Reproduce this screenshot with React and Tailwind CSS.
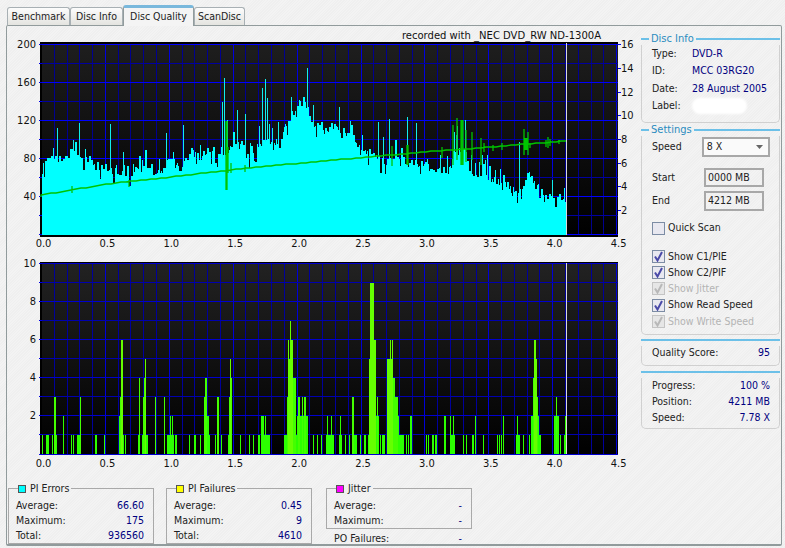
import React from "react";

const FONT = "font-['DejaVu_Sans_Condensed','DejaVu_Sans',sans-serif] text-[10.5px]";

// top chart: outline of the PI error bars as [x, y] in page pixels
const errorOutline = [
  [41, 166], [53, 155], [63, 162], [70, 153], [87, 155], [93, 165], [107, 168], [123, 173], [133, 172], [143, 165],
  [157, 173], [170, 160], [180, 165], [193, 148], [200, 156], [207, 149], [217, 151], [222, 155], [233, 144], [243, 149],
  [253, 155], [263, 138], [273, 147], [280, 137], [287, 122], [292, 107], [298, 102], [303, 102], [308, 112], [313, 127],
  [320, 123], [327, 128], [333, 125], [340, 130], [347, 132], [353, 135], [360, 148], [367, 148], [373, 153], [380, 160],
  [390, 157], [400, 157], [410, 165], [420, 163], [430, 168], [440, 170], [450, 170], [453, 150], [463, 152], [470, 170],
  [480, 175], [490, 180], [500, 180], [513, 190], [524, 188], [527, 172], [532, 178], [537, 182], [543, 198], [557, 195],
  [566, 196],
];

const errorSpikes = [
  [53, 148], [57, 128], [73, 140], [79, 123], [110, 124], [123, 152], [166, 133], [183, 125], [193, 150],
  [222, 102], [224, 78], [227, 120], [237, 110], [245, 114], [259, 126], [262, 88], [265, 79], [267, 98], [269, 124],
  [272, 128], [278, 122], [291, 97], [307, 68], [313, 105], [339, 107], [350, 121], [378, 122], [383, 137], [389, 119],
  [407, 117], [416, 123], [427, 159], [440, 155], [454, 132], [457, 126], [462, 140], [465, 120], [471, 155], [479, 162],
  [482, 155], [487, 155], [519, 142], [552, 180],
];

// read speed jitter: [x, top, bottom]
const speedTicks = [
  [72, 186, 193], [129, 180, 187], [226, 121, 190], [227, 121, 190], [228, 147, 173], [231, 163, 173], [245, 165, 172],
  [392, 146, 166], [407, 145, 165], [408, 145, 165], [442, 147, 158], [453, 125, 165], [457, 118, 160], [461, 120, 165],
  [462, 120, 165], [463, 120, 165], [466, 130, 162], [472, 132, 160], [481, 138, 165], [484, 143, 152], [493, 145, 151],
  [502, 143, 150], [524, 129, 155], [525, 138, 150], [526, 138, 150], [527, 138, 150], [528, 132, 155], [530, 143, 148],
  [546, 140, 147], [548, 137, 148], [550, 139, 146], [559, 140, 144],
];

// bottom chart: [x0, x1, value]
const failureBars = [
  [42, 43, 1], [46, 49, 1], [52, 53, 1], [54, 56, 3], [56, 57, 1], [63, 64, 2], [71, 72, 1], [73, 74, 1],
  [77, 80, 1], [80, 81, 3], [95, 97, 1], [104, 105, 1], [119, 120, 2], [120, 121, 3], [121, 123, 6], [123, 124, 1],
  [125, 126, 1], [138, 140, 1], [139, 140, 4], [142, 143, 1], [143, 144, 3], [144, 145, 4], [145, 146, 5], [146, 148, 1],
  [155, 156, 3], [164, 165, 3], [167, 170, 1], [170, 171, 2], [171, 172, 1], [172, 173, 2], [173, 174, 1], [175, 177, 1],
  [189, 190, 1], [194, 196, 1], [200, 201, 1], [204, 205, 3], [205, 207, 4], [207, 209, 2], [209, 210, 1], [215, 216, 1],
  [217, 219, 3], [221, 222, 1], [228, 229, 1], [229, 230, 3], [230, 231, 5], [231, 232, 4], [240, 241, 1], [249, 250, 1],
  [253, 254, 1], [258, 260, 1], [261, 264, 2], [264, 265, 1], [265, 266, 2], [266, 270, 1], [284, 287, 1], [287, 288, 3],
  [288, 289, 6], [289, 290, 5], [290, 291, 7], [291, 293, 6], [293, 296, 4], [296, 297, 1], [297, 298, 2], [298, 300, 3],
  [300, 302, 2], [302, 303, 3], [303, 304, 2], [304, 306, 3], [306, 308, 2], [313, 314, 1], [317, 318, 1],
  [321, 322, 1], [326, 332, 1], [327, 328, 2], [331, 332, 2], [332, 334, 1], [339, 342, 1], [340, 341, 2], [345, 346, 1],
  [349, 350, 1], [352, 354, 3], [354, 357, 1], [360, 361, 1], [364, 366, 1], [368, 369, 1], [369, 370, 5], [370, 374, 9],
  [374, 376, 6], [376, 377, 2], [377, 378, 3], [378, 379, 2], [380, 381, 1], [382, 385, 1], [387, 390, 5], [390, 391, 6],
  [391, 392, 5], [392, 393, 6], [393, 395, 4], [395, 398, 3], [398, 399, 2], [399, 404, 1], [406, 407, 1], [408, 409, 1],
  [410, 412, 2], [426, 427, 1], [428, 429, 1], [432, 434, 1], [435, 437, 1], [444, 446, 2], [450, 451, 2], [451, 453, 1],
  [453, 454, 2], [454, 455, 1], [463, 464, 1], [466, 467, 1], [472, 474, 1], [475, 476, 2], [483, 484, 1], [497, 498, 1],
  [499, 500, 1], [501, 502, 1], [503, 504, 2], [516, 517, 1], [517, 518, 2], [518, 520, 1], [523, 524, 1], [529, 530, 1],
  [531, 533, 2], [533, 534, 4], [534, 536, 6], [536, 537, 5], [537, 538, 3], [538, 539, 2], [539, 541, 1], [554, 556, 2],
  [556, 557, 3], [557, 559, 2], [560, 561, 1], [564, 565, 1], [565, 566, 2], [566, 567, 3],
];

const minorX = [];
for (let i = 0; i <= 45; i++) minorX.push(41.5 + i * 12.78);

function lerp(points, x) {
  for (let i = 1; i < points.length; i++) {
    if (x <= points[i][0]) {
      const [x0, y0] = points[i - 1];
      const [x1, y1] = points[i];
      return y0 + ((y1 - y0) * (x - x0)) / (x1 - x0);
    }
  }
  return points[points.length - 1][1];
}

function buildErrorPath() {
  let seed = 4211;
  const rand = () => {
    seed = (seed * 16807) % 2147483647;
    return seed / 2147483647;
  };
  let d = "";
  let top = 166;
  for (let x = 41; x <= 566; x++) {
    if (x % 2 === 1 || rand() > 0.6) {
      top = lerp(errorOutline, x) + rand() * 9 - 4;
      const r = rand();
      if (r > 0.84) top += rand() * 14;
      else if (r < 0.12) top -= rand() * 15;
    }
    d += `M${x + 0.5} ${Math.round(top)}V235`;
  }
  return d;
}

function buildSpikePath() {
  return errorSpikes.map(([x, y]) => `M${x + 0.5} ${y}V200`).join("");
}

function buildSpeedPath() {
  const line = [[41, 195], [107, 184], [180, 176], [247, 168], [313, 162], [380, 156], [423, 152], [480, 148], [513, 145], [566, 141]];
  let d = "M41 197";
  for (let x = 41; x <= 566; x += 5) d += `L${x} ${Math.round(lerp(line, x))}`;
  d += "L565 141";
  for (const [x, y0, y1] of speedTicks) d += `M${x} ${y0}V${y1}`;
  return d;
}

const errorPath = buildErrorPath();
const spikePath = buildSpikePath();
const speedPath = buildSpeedPath();

function Grid({ top, step, major, minor, rowMajor, rowMinor }) {
  const bottom = top + step * 10;
  const rows = [0, 1, 2, 3, 4, 5, 6, 7, 8, 9, 10];
  return (
    <g shapeRendering="crispEdges">
      {minorX.map((x, i) => (
        <line key={i} x1={x} x2={x} y1={top} y2={bottom} stroke={i % 5 === 0 ? major : minor} />
      ))}
      {rows.map((i) => (
        <line key={i} x1="40" x2="618" y1={top + i * step + 0.5} y2={top + i * step + 0.5} stroke={i % 2 === 0 ? rowMajor : rowMinor} />
      ))}
    </g>
  );
}

function AxisX({ y }) {
  const labels = ["0.0", "0.5", "1.0", "1.5", "2.0", "2.5", "3.0", "3.5", "4.0", "4.5"];
  return labels.map((label, i) => (
    <text key={label} x={43.5 + i * 63.9} y={y} textAnchor="middle" fill="#111">{label}</text>
  ));
}

function LeftTicks({ top, step }) {
  const rows = [0, 1, 2, 3, 4, 5, 6, 7, 8, 9, 10];
  return rows.map((i) => (
    <line key={i} x1="39" x2="42" y1={top + i * step + 0.5} y2={top + i * step + 0.5} stroke="#0000e6" shapeRendering="crispEdges" />
  ));
}

function ErrorChart() {
  return (
    <svg width="634" height="224" viewBox="7 28 634 224" className="block" fontSize="11">
      <defs>
        <linearGradient id="plotTop" x1="0" y1="0" x2="0" y2="1">
          <stop offset="0" stopColor="#1e1e1e" />
          <stop offset="1" stopColor="#000" />
        </linearGradient>
      </defs>
      <text x="601" y="39" textAnchor="end" fill="#111" fontSize="11.15">recorded with _NEC DVD_RW ND-1300A</text>
      <rect x="40" y="42" width="578" height="194" fill="#000" shapeRendering="crispEdges" />
      <rect x="42" y="44" width="576" height="190" fill="url(#plotTop)" shapeRendering="crispEdges" />
      <Grid top={44} step={19} major="#0000e0" minor="#000090" rowMajor="#0000ff" rowMinor="#0000a0" />
      <path d={spikePath} stroke="#10eeee" strokeWidth="1" shapeRendering="crispEdges" />
      <path d={errorPath} stroke="#00ffff" strokeWidth="1" shapeRendering="crispEdges" />
      <rect x="40" y="43" width="2" height="193" fill="#000" shapeRendering="crispEdges" />
      <rect x="40" y="235" width="578" height="2" fill="#000" shapeRendering="crispEdges" />
      <LeftTicks top={44} step={19} />
      <path d={speedPath} fill="none" stroke="#00c400" strokeWidth="1.3" />
      <rect x="566" y="43" width="1" height="192" fill="#d8d8d8" shapeRendering="crispEdges" />
      {[["200", 44], ["160", 82], ["120", 120], ["80", 158], ["40", 196]].map(([t, y]) => (
        <text key={t} x="36" y={y + 4} textAnchor="end" fill="#111">{t}</text>
      ))}
      {[["16", 44], ["14", 68], ["12", 92], ["10", 115], ["8", 139], ["6", 163], ["4", 186], ["2", 210]].map(([t, y]) => (
        <g key={t}>
          <line x1="618" x2="621" y1={y + 0.5} y2={y + 0.5} stroke="#0000e6" shapeRendering="crispEdges" />
          <text x="621" y={y + 4} fill="#111">{t}</text>
        </g>
      ))}
      <AxisX y={247} />
    </svg>
  );
}

function FailureChart() {
  return (
    <svg width="634" height="220" viewBox="7 252 634 220" className="block" fontSize="11">
      <defs>
        <linearGradient id="plotBottom" x1="0" y1="0" x2="0" y2="1">
          <stop offset="0" stopColor="#222" />
          <stop offset="1" stopColor="#000" />
        </linearGradient>
      </defs>
      <rect x="40" y="262" width="578" height="193" fill="#000" shapeRendering="crispEdges" />
      <rect x="42" y="264" width="576" height="190" fill="url(#plotBottom)" shapeRendering="crispEdges" />
      <Grid top={263} step={19.05} major="#0000d8" minor="#00009c" rowMajor="#0000d0" rowMinor="#0000b0" />
      <g shapeRendering="crispEdges">
        {failureBars.map(([x0, x1, v], i) => (
          <rect key={i} x={x0} y={454 - v * 19.05} width={x1 - x0} height={v * 19.05} fill={v >= 5 ? "#66ff00" : v >= 3 ? "#44ff00" : "#2cff00"} />
        ))}
      </g>
      <rect x="40" y="263" width="2" height="192" fill="#000" shapeRendering="crispEdges" />
      <LeftTicks top={263} step={19.05} />
      <rect x="566" y="263" width="1" height="191" fill="#d8d8d8" shapeRendering="crispEdges" />
      {[["10", 263], ["8", 301], ["6", 339], ["4", 377], ["2", 415]].map(([t, y]) => (
        <text key={t} x="36" y={y + 4} textAnchor="end" fill="#111">{t}</text>
      ))}
      <AxisX y={467} />
    </svg>
  );
}

function StatRow({ label, value }) {
  return (
    <div className="flex justify-between h-[15px] items-center">
      <span className="text-[#222]">{label}</span>
      <span className="text-[#000080]">{value}</span>
    </div>
  );
}

function StatBox({ title, color, rows, className }) {
  return (
    <fieldset className={`border border-[#a9a9a9] w-[146px] pl-[7px] pr-[9px] ${className || ""}`}>
      <legend className="ml-[2px] flex items-center gap-[4px] pr-[2px] text-[#222] leading-[11px]">
        <span className={`w-[8px] h-[8px] border border-[#555] ${color}`} />
        {title}
      </legend>
      <div className="pt-[4px]">
        {rows.map(([label, value]) => (
          <StatRow key={label} label={label} value={value} />
        ))}
      </div>
    </fieldset>
  );
}

function Group({ title, className, children }) {
  return (
    <div className={className}>
      <div className="flex items-center h-[12px] gap-[2px]">
        {title && <div className="w-[8px] h-[2px] bg-[#6cc0e8]" />}
        {title && <span className="text-[#2a8cc0] text-[11px] leading-[12px]">{title}</span>}
        <div className="flex-1 h-[2px] bg-[#6cc0e8]" />
      </div>
      <div className="border border-t-0 border-[#d0d0d0] rounded-b-[5px] pl-[10px] pr-[9px]">{children}</div>
    </div>
  );
}

function Check({ label, checked, disabled }) {
  const mark = disabled ? "#b8b8b8" : "#4a4aa8";
  return (
    <div className="flex items-center gap-[3px] h-[16.25px]">
      <span className={`w-[13px] h-[13px] border flex items-center justify-center ${disabled ? "border-[#c4c4c4] bg-[#e6e6e6]" : "border-[#7c8ca4] bg-[#e8e8f0]"}`}>
        {checked && (
          <svg width="11" height="11" viewBox="0 0 11 11">
            <path d="M2 5.5 L4.5 9.5 L9 1" fill="none" stroke={mark} strokeWidth="2" />
          </svg>
        )}
      </span>
      <span className={disabled ? "text-[#b4b4b4]" : "text-[#222]"}>{label}</span>
    </div>
  );
}

function InfoRow({ label, value }) {
  return (
    <div className="flex h-[17.5px] items-center">
      <span className="w-[40px] text-[#222]">{label}</span>
      {value && <span className="text-[#000080]">{value}</span>}
    </div>
  );
}

function Field({ label, value, height, className }) {
  return (
    <div className={`flex items-center ${className}`}>
      <span className="w-[52px] text-[#222]">{label}</span>
      <div className={`w-[60px] ${height} border-2 border-[#a8a8a8] flex items-center pl-[2px] text-[#222]`}>{value}</div>
    </div>
  );
}

function ReadOut({ label, value }) {
  return (
    <div className="flex justify-between h-[16px] items-center">
      <span className="text-[#222]">{label}</span>
      <span className="text-[#000080]">{value}</span>
    </div>
  );
}

function Tab({ label, width, active }) {
  if (active) {
    return (
      <div className={`${width} h-[21px] -mb-[1px] border-x border-[#919b9c] border-t-[3px] border-t-[#79b8dc] rounded-t-[3px] bg-[#f4f4f4] flex justify-center pt-[1px] text-[#222] z-10`}>
        {label}
      </div>
    );
  }
  return (
    <div className={`${width} h-[18px] border border-b-0 border-[#a8b0b4] rounded-t-[3px] bg-gradient-to-b from-[#fcfcfc] to-[#e4e4e0] flex justify-center items-center text-[#222]`}>
      {label}
    </div>
  );
}

export default function App() {
  return (
    <div className={`${FONT} w-[785px] h-[548px] overflow-hidden bg-[repeating-linear-gradient(135deg,#f3f3f3_0,#f3f3f3_1px,#efefef_1px,#efefef_2px)] pl-[6px] pr-[3px] pt-[4px]`}>
      <div className="flex items-end h-[21px] pl-[1px]">
        <Tab label="Benchmark" width="w-[63px]" />
        <Tab label="Disc Info" width="w-[53px]" />
        <Tab label="Disc Quality" width="w-[71px]" active />
        <Tab label="ScanDisc" width="w-[51px]" />
      </div>
      <div className="h-[521px] border border-[#919b9c] border-b-2 rounded-[2px] flex">
        <div className="w-[634px] shrink-0">
          <div className="pt-[2px]">
            <ErrorChart />
            <FailureChart />
          </div>
          <div className="flex items-start pl-[1px] mt-[11px]">
            <StatBox
              title="PI Errors"
              color="bg-[#00ffff]"
              rows={[["Average:", "66.60"], ["Maximum:", "175"], ["Total:", "936560"]]}
            />
            <StatBox
              title="PI Failures"
              color="bg-[#ffff00]"
              className="ml-[12px]"
              rows={[["Average:", "0.45"], ["Maximum:", "9"], ["Total:", "4610"]]}
            />
            <div className="ml-[14px] w-[146px]">
              <StatBox title="Jitter" color="bg-[#ff00ff]" rows={[["Average:", "-"], ["Maximum:", "-"]]} />
              <div className="flex justify-between pl-[8px] pr-[10px] h-[15px] items-center mt-[2px]">
                <span className="text-[#222]">PO Failures:</span>
                <span className="text-[#000080]">-</span>
              </div>
            </div>
          </div>
        </div>
        <div className="w-[139px] pt-[7px] flex flex-col">
          <Group title="Disc Info" className="h-[91px]">
            <div className="h-[77px]">
              <InfoRow label="Type:" value="DVD-R" />
              <InfoRow label="ID:" value="MCC 03RG20" />
              <InfoRow label="Date:" value="28 August 2005" />
              <div className="flex items-center h-[17.5px]">
                <span className="w-[40px] text-[#222]">Label:</span>
                <div className="w-[55px] h-[16px] rounded-[8px] bg-white blur-[1px]" />
              </div>
            </div>
          </Group>
          <Group title="Settings" className="h-[210px]">
            <div className="h-[198px]">
              <div className="flex items-center pt-[1px]">
                <span className="w-[52px] text-[#222]">Speed</span>
                <div className="w-[71px] h-[20px] border-2 border-[#a8a8a8] bg-[#fafafa] flex items-center justify-between pl-[3px] pr-[2px] text-[#222]">
                  8 X
                  <svg width="9" height="5" viewBox="0 0 9 5" className="mr-[1px]"><path d="M0 0H7L3.5 4Z" fill="#666" /></svg>
                </div>
              </div>
              <Field label="Start" value="0000 MB" height="h-[19px]" className="mt-[11px]" />
              <Field label="End" value="4212 MB" height="h-[20px]" className="mt-[4px]" />
              <div className="mt-[9px]">
                <Check label="Quick Scan" />
              </div>
              <div className="mt-[12px] flex flex-col">
                <Check label="Show C1/PIE" checked />
                <Check label="Show C2/PIF" checked />
                <Check label="Show Jitter" checked disabled />
                <Check label="Show Read Speed" checked />
                <Check label="Show Write Speed" checked disabled />
              </div>
            </div>
          </Group>
          <Group className="h-[31px]">
            <div className="flex justify-between h-[14px] items-center mb-[5px]">
              <span className="text-[#222]">Quality Score:</span>
              <span className="text-[#000080]">95</span>
            </div>
          </Group>
          <Group className="mt-[1px]">
            <div className="pb-[2px]">
              <ReadOut label="Progress:" value="100 %" />
              <ReadOut label="Position:" value="4211 MB" />
              <ReadOut label="Speed:" value="7.78 X" />
            </div>
          </Group>
        </div>
      </div>
    </div>
  );
}
